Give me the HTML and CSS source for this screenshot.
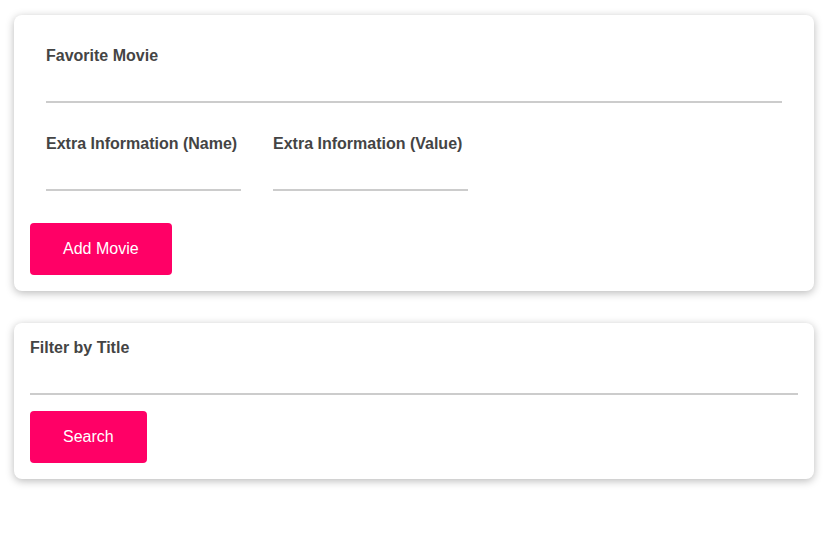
FILE: index.html
```html
<!DOCTYPE html>
<html>
<head>
<meta charset="utf-8">
<link rel="stylesheet" href="styles.css">
</head>
<body>
<main class="page">
  <section class="card">
    <div class="form-control">
      <label class="label">Favorite Movie</label>
      <input class="input input-full" type="text">
    </div>
    <div class="row">
      <div class="form-control">
        <label class="label">Extra Information (Name)</label>
        <input class="input input-short" type="text">
      </div>
      <div class="form-control">
        <label class="label">Extra Information (Value)</label>
        <input class="input input-short" type="text">
      </div>
    </div>
    <button class="btn">Add Movie</button>
  </section>
  <section class="card">
    <label class="label">Filter by Title</label>
    <input class="input input-full" type="text">
    <button class="btn">Search</button>
  </section>
</main>
</body>
</html>
```

FILE: styles.css
```css
* { box-sizing: border-box; }
html, body { margin: 0; padding: 0; background: #fff; }
body { font-family: "Liberation Sans", Arial, sans-serif; color: #444; min-height: 544px; }
.page {
  padding: 15px 24px 60px 14px;
  display: flex;
  flex-direction: column;
  gap: 32px;
}
.card {
  width: 800px;
  background: #fff;
  border-radius: 8px;
  box-shadow: 0 2px 8px rgba(0, 0, 0, 0.28);
  padding: 16px;
  display: flex;
  flex-direction: column;
}
.form-control {
  padding: 16px;
  display: flex;
  flex-direction: column;
}
.row { display: flex; }
.label {
  display: block;
  font-weight: bold;
  font-size: 16px;
  line-height: 18px;
  margin-bottom: 6px;
  color: #444;
}
.input {
  display: block;
  height: 32px;
  border: none;
  border-bottom: 2px solid #ccc;
  font: inherit;
  outline: none;
  padding: 0;
  background: transparent;
}
.input-full { width: 100%; }
.input-short { width: 195px; }
.btn {
  align-self: flex-start;
  margin-top: 16px;
  font-family: "Liberation Sans", Arial, sans-serif;
  font-size: 16px;
  line-height: 20px;
  padding: 16px 33px;
  background: #ff0066;
  color: #fff;
  border: none;
  border-radius: 4px;
  cursor: pointer;
}
```
